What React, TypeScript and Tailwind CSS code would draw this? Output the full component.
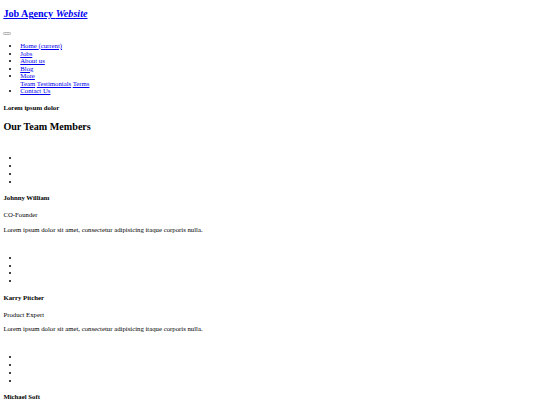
import React from "react";

const members = [
  { name: "Johnny William", role: "CO-Founder" },
  { name: "Karry Pitcher", role: "Product Expert" },
  { name: "Michael Soft", role: "Marketing Head" },
];

const linkCls = "text-[#0000ee] underline";

export default function App() {
  return (
    <div className="[zoom:0.421875] bg-white text-black font-['Liberation_Serif',serif] text-base leading-[18.4px] px-2 pb-2">
      <nav>
        <a href="#" className={linkCls}>
          <h1 className="text-2xl leading-[27.6px] font-bold my-[19.92px]">
            Job Agency <em>Website</em>
          </h1>
        </a>
        <div className="h-[16px] flex items-start pt-[8px]">
          <button className="block w-[17px] h-[7px] border-2 border-[#b4b4b4] rounded-[3px] bg-[#f0f0f0]"></button>
        </div>
        <ul className="list-disc pl-10 my-4 leading-[18px]">
          <li>
            <a href="#" className={linkCls}>
              Home <span>(current)</span>
            </a>
          </li>
          <li>
            <a href="#" className={linkCls}>Jobs</a>
          </li>
          <li>
            <a href="#" className={linkCls}>About us</a>
          </li>
          <li>
            <a href="#" className={linkCls}>Blog</a>
          </li>
          <li>
            <a href="#" className={linkCls}>More</a>
            <div>
              <a href="#" className={linkCls}>Team</a>{" "}
              <a href="#" className={linkCls}>Testimonials</a>{" "}
              <a href="#" className={linkCls}>Terms</a>
            </div>
          </li>
          <li>
            <a href="#" className={linkCls}>Contact Us</a>
          </li>
        </ul>
      </nav>
      <h4 className="text-base leading-[18.4px] font-bold mt-[22px] mb-0">Lorem ipsum dolor</h4>
      <h2 className="text-2xl leading-[27.6px] font-bold mt-[21px] mb-[19.92px]">Our Team Members</h2>
      {members.map((m, i) => (
        <div key={m.name}>
          <div className={i === 0 ? "h-[15.6px]" : "h-[16.6px]"}></div>
          <ul className="list-disc pl-10 my-4">
            <li>&nbsp;</li>
            <li>&nbsp;</li>
            <li>&nbsp;</li>
            <li>&nbsp;</li>
          </ul>
          <h4 className="text-base leading-[18.4px] font-bold my-[21.28px]">{m.name}</h4>
          <p className="my-4">{m.role}</p>
          <p className="my-4">
            Lorem ipsum dolor sit amet, consectetur adipisicing itaque corporis nulla.
          </p>
        </div>
      ))}
    </div>
  );
}
